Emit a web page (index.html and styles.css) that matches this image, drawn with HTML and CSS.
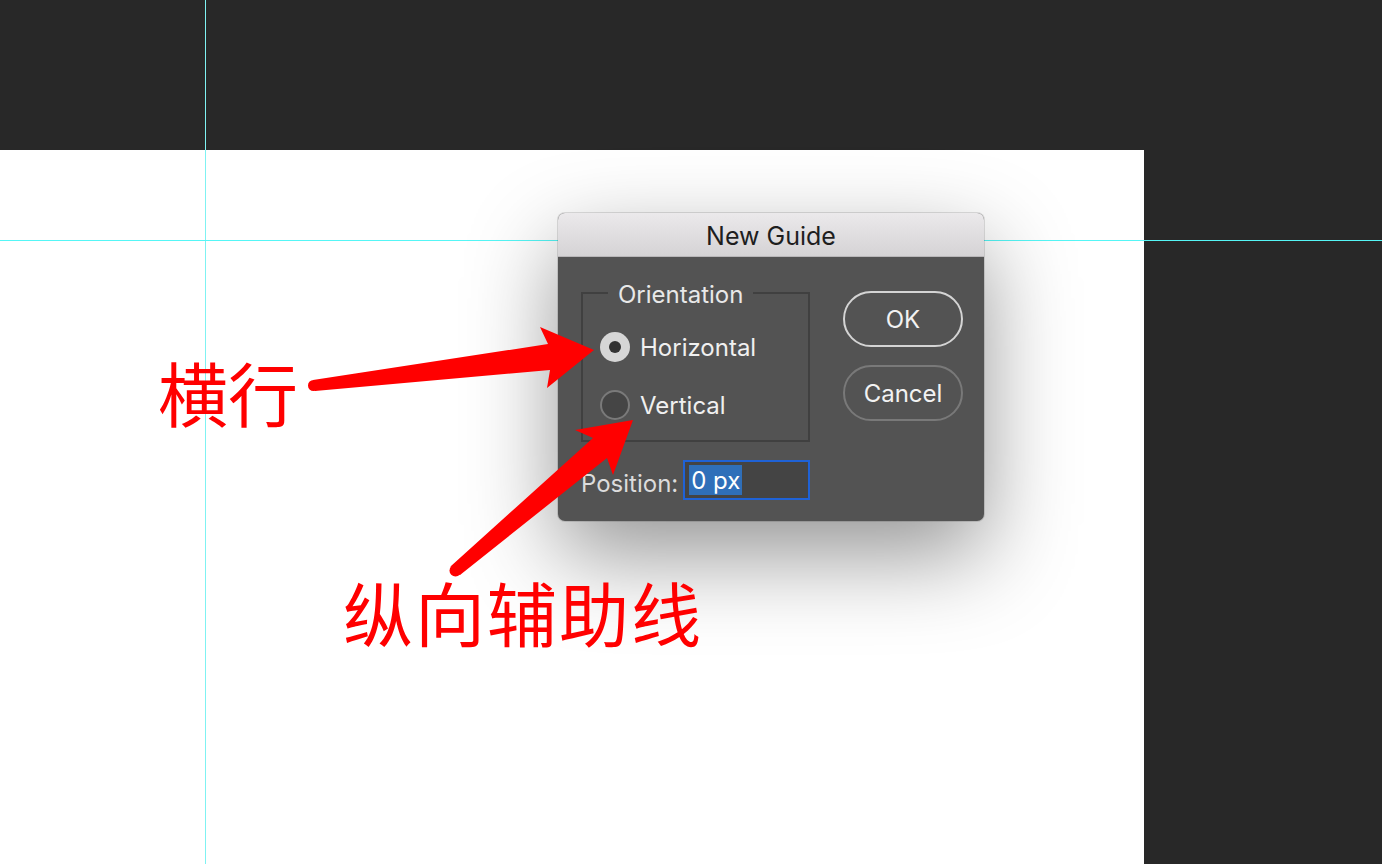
FILE: index.html
```html
<!DOCTYPE html>
<html>
<head>
<meta charset="utf-8">
<link rel="stylesheet" href="styles.css">
</head>
<body>
<div class="app">
  <div class="topbar"></div>
  <div class="canvas"></div>

  <div class="guide guide-v"></div>
  <div class="guide guide-h"></div>

  <div class="dialog">
    <div class="titlebar">New Guide</div>
    <div class="dialog-body">
      <div class="left-col">
        <fieldset class="group">
          <legend class="group-legend">Orientation</legend>
          <label class="radio-row">
            <span class="radio radio-on"><span class="radio-dot"></span></span>
            <span class="radio-label">Horizontal</span>
          </label>
          <label class="radio-row">
            <span class="radio radio-off"></span>
            <span class="radio-label">Vertical</span>
          </label>
        </fieldset>
        <div class="position-row">
          <span class="position-label">Position:</span>
          <span class="input"><span class="selection">0 px</span></span>
        </div>
      </div>
      <div class="right-col">
        <button class="btn btn-ok">OK</button>
        <button class="btn btn-cancel">Cancel</button>
      </div>
    </div>
  </div>

  <svg class="arrows" width="1382" height="864" viewBox="0 0 1382 864">
    <polygon fill="#ff0000" points="313,380 548,344 540,327 594,350 547,388 550,370 315,391"/>
    <circle fill="#ff0000" cx="313.5" cy="385.5" r="5.5"/>
    <polygon fill="#ff0000" points="451,566 593,438 575,430 633,420 613,475 607,458 460,575"/>
    <circle fill="#ff0000" cx="455.5" cy="570.5" r="6"/>
  </svg>

  <div class="note note-h">横行</div>
  <div class="note note-v">纵向辅助线</div>
</div>
</body>
</html>
```

FILE: styles.css
```css
html, body {
  margin: 0;
  padding: 0;
}
body {
  background: #282828;
  width: 1382px;
  height: 864px;
  overflow: hidden;
}
.app {
  position: relative;
  width: 1382px;
  height: 864px;
  display: flex;
  flex-direction: column;
}
.topbar {
  height: 150px;
  flex: none;
}
.canvas {
  width: 1144px;
  height: 714px;
  background: #ffffff;
  flex: none;
}
.guide {
  position: absolute;
  background: #55f6f6;
}
.guide-v {
  left: 205px;
  top: 0;
  width: 1px;
  height: 864px;
  background: #7ff2f2;
}
.guide-h {
  left: 0;
  top: 240px;
  width: 1382px;
  height: 1px;
}
.dialog {
  position: absolute;
  left: 558px;
  top: 213px;
  width: 426px;
  height: 308px;
  border-radius: 7px;
  background: #535353;
  box-shadow: 0 34px 90px rgba(0, 0, 0, 0.42), 0 0 0 1px rgba(0, 0, 0, 0.12);
  display: flex;
  flex-direction: column;
  overflow: hidden;
  font-family: Inter, "Liberation Sans", sans-serif;
}
.titlebar {
  height: 44px;
  flex: none;
  background: linear-gradient(#ebe9eb, #d5d3d5);
  border-bottom: 1px solid #b9b7b9;
  box-sizing: border-box;
  color: #1e1e1e;
  font-size: 25px;
  line-height: 47px;
  text-align: center;
}
.dialog-body {
  flex: 1;
  display: flex;
  padding: 24px 0 0 23px;
}
.left-col {
  width: 229px;
  display: flex;
  flex-direction: column;
}
.group {
  margin: 0;
  padding: 26px 0 0 17px;
  height: 161px;
  box-sizing: border-box;
  border: 2px solid #404040;
  display: flex;
  flex-direction: column;
  gap: 26px;
}
.group-legend {
  margin-left: 8px;
  padding: 4px 10px 0 10px;
  color: #e8e8e8;
  font-size: 24px;
  line-height: 20px;
}
.radio-row {
  display: flex;
  align-items: center;
  gap: 10px;
  height: 32px;
}
.radio {
  width: 30px;
  height: 30px;
  border-radius: 50%;
  box-sizing: border-box;
  display: flex;
  align-items: center;
  justify-content: center;
  flex: none;
}
.radio-on {
  background: #d6d6d6;
}
.radio-dot {
  width: 12px;
  height: 12px;
  border-radius: 50%;
  background: #333333;
}
.radio-off {
  background: #454545;
  border: 2px solid #7a7a7a;
}
.radio-label {
  color: #f0f0f0;
  font-size: 24px;
}
.position-row {
  margin-top: 18px;
  display: flex;
  align-items: center;
  gap: 5px;
}
.position-label {
  color: #dcdcdc;
  font-size: 24px;
  padding-top: 6px;
}
.input {
  width: 127px;
  height: 40px;
  box-sizing: border-box;
  border: 2px solid #1f62d6;
  background: #444444;
  padding: 3px 4px;
  display: flex;
}
.selection {
  background: #2f6fb9;
  color: #ffffff;
  font-size: 24px;
  line-height: 31px;
  padding: 0 2px;
}
.right-col {
  margin-left: 33px;
  margin-top: 10px;
  display: flex;
  flex-direction: column;
  gap: 18px;
}
.btn {
  width: 120px;
  height: 56px;
  border-radius: 28px;
  background: transparent;
  font-family: Inter, "Liberation Sans", sans-serif;
  font-size: 24px;
  color: #f2f2f2;
  box-sizing: border-box;
  padding: 0;
}
.btn-ok {
  border: 2px solid #d4d4d4;
}
.btn-cancel {
  border: 2px solid #797979;
}
.arrows {
  position: absolute;
  left: 0;
  top: 0;
  pointer-events: none;
}
.note {
  position: absolute;
  color: #ff0000;
  font-family: "Noto Sans CJK SC", sans-serif;
  font-size: 70px;
  line-height: 70px;
  white-space: nowrap;
}
.note-h {
  left: 158px;
  top: 357px;
}
.note-v {
  left: 343px;
  top: 577px;
  letter-spacing: 2px;
}
```
